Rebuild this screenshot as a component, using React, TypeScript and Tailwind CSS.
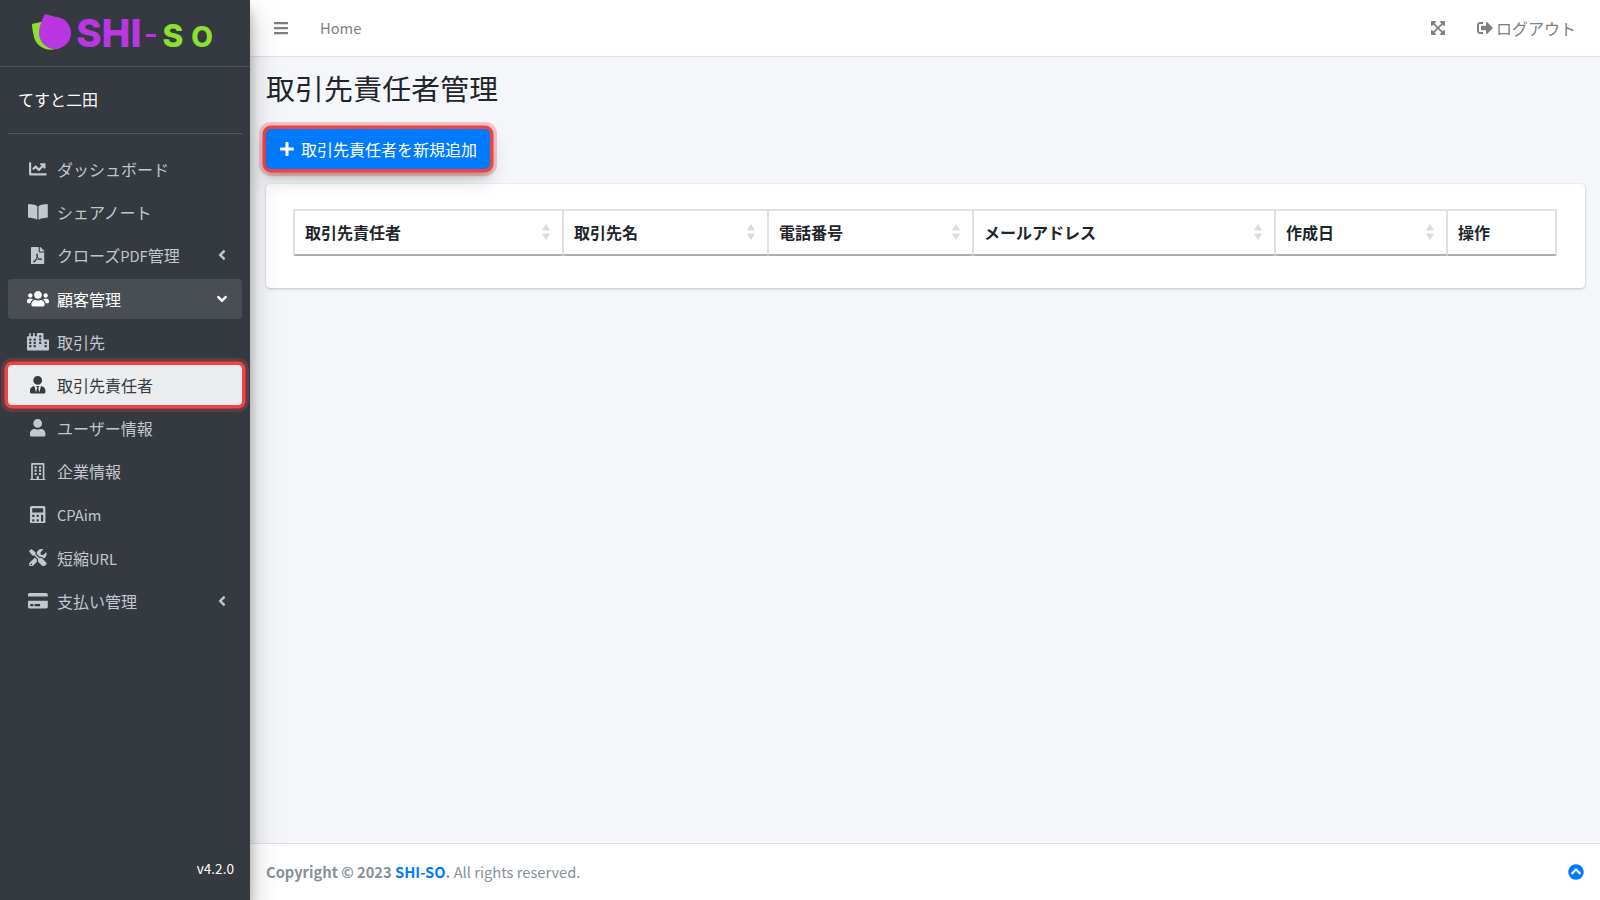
import {
  FaAngleDown,
  FaAngleLeft,
  FaBars,
  FaBookOpen,
  FaCalculator,
  FaChartLine,
  FaChevronCircleUp,
  FaCity,
  FaCreditCard,
  FaExpandArrowsAlt,
  FaFilePdf,
  FaPlus,
  FaRegBuilding,
  FaSignOutAlt,
  FaTools,
  FaUser,
  FaUsers,
  FaUserTie,
} from "react-icons/fa";

const font = { fontFamily: '"Noto Sans CJK JP", "Noto Sans", sans-serif' };
const logoFont = { fontFamily: '"Inter", sans-serif' };

// latin glyphs of the CJK family run large, this size lines them up with the reference
const Latin = ({ children }: { children: React.ReactNode }) => <span className="text-[14.7px]">{children}</span>;

const Logo = () => (
  <div className="flex items-baseline justify-center h-[67px] border-b border-[#4b545c] pr-[8px] pt-[11px]">
    <svg width="44" height="44" viewBox="0 0 44 44" className="shrink-0 self-start -mt-[1px]">
      <path d="M3 14 L16 11 L30 38 C18 43 7 36 5 27 C4 22 3 18 3 14 Z" fill="#8be030" />
      <path d="M16 4 L27 7 A16 16 0 1 1 10 23 C10 16 13 10 16 4 Z" fill="#b936e2" />
    </svg>
    <span className="ml-[3px] text-[38.5px] leading-[44px] font-extrabold text-[#b936e2]" style={logoFont}>
      SHI
    </span>
    <span className="ml-[5px] self-start mt-[22.5px] w-[10px] h-[3.5px] bg-[#b936e2]" />
    <span className="ml-[6px] text-[31.5px] leading-[44px] font-extrabold text-[#8be030]" style={logoFont}>
      S
    </span>
    <span className="ml-[8px] text-[28px] leading-[44px] font-extrabold text-[#8be030]" style={logoFont}>
      O
    </span>
  </div>
);

const NavItem = ({
  icon,
  label,
  arrow,
  variant,
}: {
  icon: React.ReactNode;
  label: React.ReactNode;
  arrow?: "left" | "down";
  variant?: "open" | "active";
}) => {
  let cls = "text-[#c2c7d0]";
  if (variant === "open") cls = "bg-[#494e54] text-[#ffffff]";
  if (variant === "active")
    cls = "bg-[#ebecee] text-[#343a40] shadow-[0_0_0_3.5px_#ef4444,0_0_0_7px_rgba(239,68,68,0.25)] relative z-10";
  return (
    <li>
      <a className={`flex items-center h-[40px] mb-[3.2px] rounded-[4px] pl-[17px] pr-[12px] text-[16px] ${cls}`}>
        <span className="w-[26px] flex justify-center shrink-0">{icon}</span>
        <span className="ml-[6px]">{label}</span>
        {arrow === "left" && <FaAngleLeft className="ml-auto text-[16px]" />}
        {arrow === "down" && <FaAngleDown className="ml-auto text-[16px]" />}
      </a>
    </li>
  );
};

const Sidebar = () => (
  <aside className="relative z-20 w-[250px] shrink-0 h-full bg-[#343a40] flex flex-col shadow-[0_14px_28px_rgba(0,0,0,0.25),0_10px_10px_rgba(0,0,0,0.22)]">
    <Logo />
    <div className="mx-[8px] h-[67px] border-b border-[#4f5962] flex items-center pl-[10px] pb-[2px] text-[16px] text-[#ffffff]">
      てすと二田
    </div>
    <ul className="px-[8px] pt-[15px]">
      <NavItem icon={<FaChartLine className="w-[17.6px] h-[17.6px]" />} label="ダッシュボード" />
      <NavItem icon={<FaBookOpen className="w-[19.8px] h-[17.6px]" />} label="シェアノート" />
      <NavItem
        icon={<FaFilePdf className="w-[13.2px] h-[17.6px]" />}
        label={
          <>
            クローズ<Latin>PDF</Latin>管理
          </>
        }
        arrow="left"
      />
      <NavItem icon={<FaUsers className="w-[22px] h-[17.6px]" />} label="顧客管理" arrow="down" variant="open" />
      <NavItem icon={<FaCity className="w-[22px] h-[17.6px]" />} label="取引先" />
      <NavItem icon={<FaUserTie className="w-[15.4px] h-[17.6px]" />} label="取引先責任者" variant="active" />
      <NavItem icon={<FaUser className="w-[15.4px] h-[17.6px]" />} label="ユーザー情報" />
      <NavItem icon={<FaRegBuilding className="w-[17.6px] h-[17.6px]" />} label="企業情報" />
      <NavItem icon={<FaCalculator className="w-[15.4px] h-[17.6px]" />} label={<Latin>CPAim</Latin>} />
      <NavItem
        icon={<FaTools className="w-[17.6px] h-[17.6px]" />}
        label={
          <>
            短縮<Latin>URL</Latin>
          </>
        }
      />
      <NavItem icon={<FaCreditCard className="w-[19.8px] h-[17.6px]" />} label="支払い管理" arrow="left" />
    </ul>
    <div className="mt-auto h-[57px] flex items-center justify-end pr-[16px] pb-[6px] text-[13.6px] text-[#ffffff]">v4.2.0</div>
  </aside>
);

const SortArrows = () => (
  <svg width="8" height="16" viewBox="0 0 8 16" className="absolute right-[12px] top-1/2 -translate-y-1/2">
    <path d="M4 0 L8 6.5 L0 6.5 Z" fill="#dcdcdc" />
    <path d="M4 16 L8 9.5 L0 9.5 Z" fill="#dcdcdc" />
  </svg>
);

const columns = [
  { label: "取引先責任者", width: 269, sort: true },
  { label: "取引先名", width: 205, sort: true },
  { label: "電話番号", width: 205, sort: true },
  { label: "メールアドレス", width: 302, sort: true },
  { label: "作成日", width: 172, sort: true },
  { label: "操作", width: 109, sort: false },
];

const App = () => {
  return (
    <div className="flex h-screen w-full overflow-hidden bg-[#f4f6f9] text-[#212529]" style={font}>
      <Sidebar />
      <div className="flex-1 min-w-0 h-full flex flex-col">
        <nav className="h-[57px] shrink-0 bg-[#ffffff] border-b border-[#dee2e6] flex items-center text-[16px] text-[#7f7f7f]">
          <FaBars className="ml-[23px] text-[16px]" />
          <span className="ml-[31px] text-[14.7px]">Home</span>
          <FaExpandArrowsAlt className="ml-auto text-[16px]" />
          <span className="ml-[31px] mr-[24px] flex items-center gap-[3px]">
            <FaSignOutAlt className="text-[16px]" />
            ログアウト
          </span>
        </nav>

        <main className="flex-1 min-h-0 pl-[16px] pr-[15px]">
          <h1 className="text-[28.8px] leading-[1.2] pt-[14px] tracking-[0.25px] text-[#212529]">取引先責任者管理</h1>
          <div className="mt-[23px]">
            <button className="relative z-10 h-[40px] w-[224px] bg-[#007bff] text-[#ffffff] rounded-[5px] text-[16px] flex items-center justify-center gap-[6px] shadow-[0_0_0_3.5px_#ef4444,0_0_0_7px_rgba(239,68,68,0.28),0_10px_20px_rgba(0,0,0,0.19),0_6px_6px_rgba(0,0,0,0.23)]">
              <FaPlus className="text-[16px]" />
              取引先責任者を新規追加
            </button>
          </div>
          <section className="mt-[15px] bg-[#ffffff] rounded-[4px] h-[104px] pt-[25px] px-[27px] shadow-[0_0_1px_rgba(0,0,0,0.13),0_1px_3px_rgba(0,0,0,0.2)]">
            <table className="w-[1264px] table-fixed border-separate border-spacing-0 border border-[#dee2e6] border-b-0">
              <thead>
                <tr>
                  {columns.map((c) => (
                    <th
                      key={c.label}
                      style={{ width: c.width }}
                      className="relative h-[46px] text-left font-bold text-[16px] pl-[10px] border-[1px] border-[#dee2e6] border-b-[2px] border-b-[#adb0b2]"
                    >
                      {c.label}
                      {c.sort && <SortArrows />}
                    </th>
                  ))}
                </tr>
              </thead>
            </table>
          </section>
        </main>

        <footer className="h-[57px] shrink-0 bg-[#ffffff] border-t border-[#dee2e6] flex items-center px-[16px] text-[14.7px] text-[#869099]">
          <span>
            <strong className="font-bold">Copyright © 2023 </strong>
            <strong className="font-bold text-[#007bff]">SHI-SO</strong>
            <strong className="font-bold">.</strong> All rights reserved.
          </span>
          <FaChevronCircleUp className="ml-auto text-[#007bff] text-[16px]" />
        </footer>
      </div>
    </div>
  );
};

export default App;
